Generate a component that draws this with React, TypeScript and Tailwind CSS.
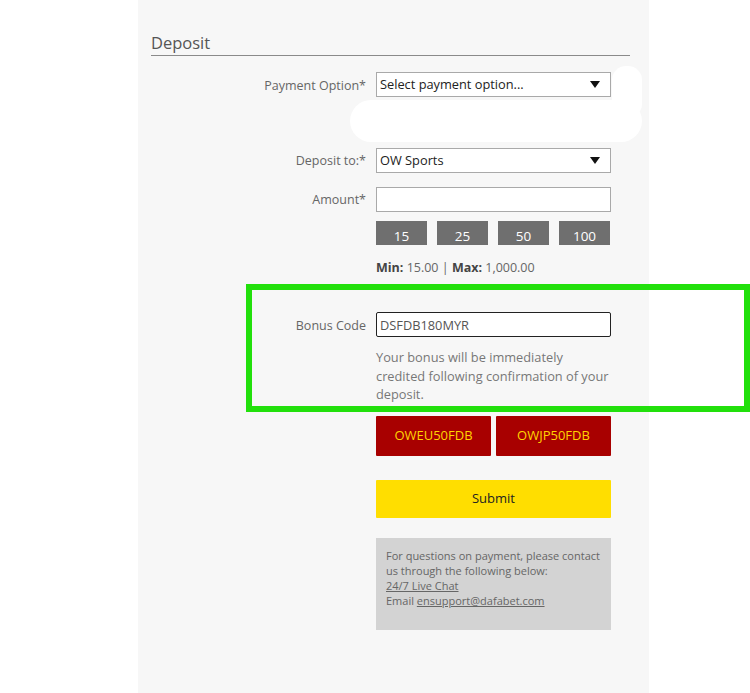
import { useState } from 'react';

const AMOUNTS = [15, 25, 50, 100];
const PROMOS = ['OWEU50FDB', 'OWJP50FDB'];

const FONT = { fontFamily: '"Open Sans", "Noto Sans", sans-serif' };

const Caret = () => (
  <svg width="10" height="7" viewBox="0 0 10 7" className="shrink-0">
    <path d="M0 0h10L5 7z" fill="#111" />
  </svg>
);

const FakeSelect = ({ value }: { value: string }) => (
  <div className="h-[25px] w-[235px] bg-white border border-[#a9a9a9] flex items-center justify-between pl-[3px] pr-[10px] text-[12.8px] text-[#222]">
    <span>{value}</span>
    <Caret />
  </div>
);

export default function App() {
  const [bonus, setBonus] = useState('DSFDB180MYR');
  const [amount, setAmount] = useState('');

  return (
    <div className="relative w-full h-[693px] bg-white overflow-hidden" style={FONT}>
      <div className="relative ml-[138px] w-[511px] h-full bg-[#f7f7f7] pt-[31px] pl-[13px] pr-[19px]">
        {/* redacted blob */}
        <div className="absolute left-[474px] top-[66px] w-[30px] h-[52px] rounded-[14px] bg-white" />
        <div className="absolute left-[212px] top-[100px] w-[292px] h-[42px] rounded-[22px] bg-white" />

        {/* Header */}
        <h2 className="text-[16.5px] leading-[23px] text-[#555] pb-[1px] border-b border-[#8a8a8a]">Deposit</h2>

        <div className="grid grid-cols-[215px_235px] gap-x-[10px] text-[12.5px] text-[#666]">
          <label className="mt-[16px] h-[25px] pt-[3px] flex items-center justify-end">Payment Option*</label>
          <div className="mt-[16px]"><FakeSelect value="Select payment option..." /></div>

          <label className="mt-[51px] h-[25px] pt-[2px] flex items-center justify-end">Deposit to:*</label>
          <div className="mt-[51px]"><FakeSelect value="OW Sports" /></div>

          <label className="mt-[14px] h-[25px] pt-[2px] flex items-center justify-end">Amount*</label>
          <div className="mt-[14px]">
            <input
              value={amount}
              onChange={(e) => setAmount(e.target.value)}
              className="h-[25px] w-[235px] bg-white border border-[#a9a9a9] px-[3px] outline-none"
            />
          </div>

          <div />
          <div className="mt-[9px] flex gap-[10px]">
            {AMOUNTS.map((a) => (
              <button key={a} className="w-[51px] h-[24px] bg-[#6f6f6f] text-white text-[13.5px] leading-[24px] pt-[3px]">
                {a}
              </button>
            ))}
          </div>

          <div />
          <div className="mt-[14px] text-[12.5px] leading-[18px] text-[#666]">
            <b className="text-[#444]">Min:</b> 15.00 | <b className="text-[#444]">Max:</b> 1,000.00
          </div>

          <label className="mt-[35px] h-[25px] pt-[3px] flex items-center justify-end">Bonus Code</label>
          <div className="mt-[35px]">
            <input
              value={bonus}
              onChange={(e) => setBonus(e.target.value)}
              className="h-[25px] w-[235px] bg-white border border-[#222] rounded-[2px] px-[3px] text-[12.8px] text-[#555] outline-none"
            />
          </div>

          <div />
          <p className="mt-[11px] text-[12.8px] leading-[18.5px] text-[#777]">
            Your bonus will be immediately
            <br />
            credited following confirmation of your
            <br />
            deposit.
          </p>

          <div />
          <div className="mt-[12px] flex gap-[5px]">
            {PROMOS.map((p) => (
              <button key={p} className="flex-1 h-[40px] bg-[#a80000] text-[#ffd400] text-[13px] rounded-[1px]">
                {p}
              </button>
            ))}
          </div>

          <div />
          <button className="mt-[24px] h-[38px] w-[235px] bg-[#ffde00] text-[#222] text-[13px] font-medium rounded-[1px]">
            Submit
          </button>

          <div />
          <div className="mt-[20px] h-[92px] bg-[#d3d3d3] px-[10px] pt-[10px] text-[11px] leading-[15px] text-[#666]">
            For questions on payment, please contact us through the following below:
            <br />
            <a className="underline">24/7 Live Chat</a>
            <br />
            Email <a className="underline">ensupport@dafabet.com</a>
          </div>
        </div>
      </div>

      {/* annotation frame */}
      <div className="absolute left-[246px] top-[284px] w-[504px] h-[128px] border-[6px] border-[#22e00c]" />
    </div>
  );
}
